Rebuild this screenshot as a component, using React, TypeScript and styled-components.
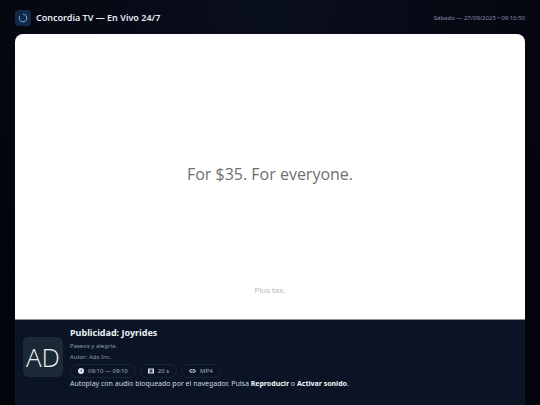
import * as React from 'react';
import styled, { createGlobalStyle } from 'styled-components';

const GlobalStyle = createGlobalStyle`
  html, body {
    margin: 0;
    height: 100%;
    overflow: hidden;
    background: #03050e;
    font-family: "Noto Sans", sans-serif;
  }
`;

const Page = styled.div`
  width: 540px;
  height: 405px;
  overflow: hidden;
  background: radial-gradient(circle at 50% 0, #0a0f1d 0, #04060f 60%, #02040c 100%);
  padding: 0 15px;
  box-sizing: border-box;
`;

const Header = styled.header`
  height: 34px;
  padding-top: 1px;
  box-sizing: border-box;
  display: flex;
  align-items: center;
  justify-content: space-between;
`;

const Brand = styled.div`
  display: flex;
  align-items: center;
  gap: 5px;
`;

const Logo = styled.div`
  width: 16px;
  height: 16px;
  border-radius: 4px;
  background: #12294a;
  display: flex;
  align-items: center;
  justify-content: center;
`;

const Title = styled.h1`
  margin: 0;
  font-size: 9px;
  font-weight: 600;
  color: #e6eaf2;
  line-height: 12px;
`;

const Clock = styled.div`
  font-size: 6px;
  color: #8491ab;
`;

const Player = styled.main`
  border-radius: 8px 8px 0 0;
  overflow: hidden;
  background: #0a1424;
`;

const Video = styled.section`
  height: 285px;
  background: #fff;
  border-bottom: 1px solid #8b8f96;
  display: flex;
  flex-direction: column;
  align-items: center;
`;

const Headline = styled.div`
  margin-top: 129px;
  font-family: "Open Sans", sans-serif;
  font-size: 16px;
  line-height: 22px;
  color: #6f6f6f;
`;

const Fine = styled.div`
  margin-top: 99px;
  font-family: "Open Sans", sans-serif;
  font-size: 8px;
  line-height: 12px;
  color: #b4b4b4;
`;

const Info = styled.section`
  height: 85px;
  box-sizing: border-box;
  padding: 7px 8px 0;
  display: flex;
  gap: 7px;
  background: #0a1424;
`;

const Poster = styled.div`
  flex: none;
  width: 40px;
  height: 40px;
  margin-top: 10px;
  border-radius: 5px;
  background: #1b2835;
  display: flex;
  align-items: center;
  justify-content: center;
  font-size: 26px;
  font-weight: 200;
  color: #e8edf4;
  font-family: "Open Sans", sans-serif;
`;

const Details = styled.div`
  display: flex;
  flex-direction: column;
  min-width: 0;
`;

const Name = styled.h2`
  margin: 0;
  font-size: 9px;
  line-height: 12px;
  font-weight: 700;
  color: #edf1f7;
`;

const Meta = styled.div<{ $top: number }>`
  margin-top: ${(p) => p.$top}px;
  font-size: 6px;
  line-height: 8px;
  color: #8e9ab0;
`;

const Chips = styled.div`
  margin-top: 3px;
  display: flex;
  gap: 4px;
`;

const Chip = styled.span`
  height: 14px;
  box-sizing: border-box;
  padding: 0 7px;
  display: inline-flex;
  align-items: center;
  gap: 4px;
  border: 1px solid #18243a;
  border-radius: 7px;
  font-size: 6px;
  color: #a3afc3;
  & svg {
    display: block;
  }
`;

const Notice = styled.p`
  margin: 1px 0 0;
  font-size: 7px;
  line-height: 10px;
  color: #cdd4e0;
  white-space: nowrap;
  & strong {
    font-weight: 700;
    color: #f0f3f8;
  }
`;

const ClockIcon = () => (
  <svg width="6" height="6" viewBox="0 0 12 12">
    <circle cx="6" cy="6" r="6" fill="#dfe5ee" />
    <path d="M6 3v3.2l2 1.2" stroke="#0a1424" strokeWidth="1.3" fill="none" />
  </svg>
);

const FilmIcon = () => (
  <svg width="6" height="6" viewBox="0 0 12 12">
    <path
      fillRule="evenodd"
      fill="#dfe5ee"
      d="M1 1h10a1 1 0 0 1 1 1v8a1 1 0 0 1-1 1H1a1 1 0 0 1-1-1V2a1 1 0 0 1 1-1zm2 2v2.4h6V3zm0 3.6V9h6V6.6z"
    />
  </svg>
);

const LinkIcon = () => (
  <svg width="7" height="6" viewBox="0 0 14 12" fill="none" stroke="#dfe5ee" strokeWidth="1.8">
    <path d="M6 8.5H4a2.6 2.6 0 0 1 0-5.2h1.5a2.6 2.6 0 0 1 2.4 1.7" />
    <path d="M8 3.5h2a2.6 2.6 0 0 1 0 5.2H8.5A2.6 2.6 0 0 1 6.1 7" />
  </svg>
);

export default function App() {
  return (
    <Page>
      <GlobalStyle />
      <Header>
        <Brand>
          <Logo>
            <svg width="10" height="10" viewBox="0 0 10 10" fill="none">
              <path
                d="M5 1.2a3.8 3.8 0 1 1-3.4 2.1"
                stroke="#6fb6e6"
                strokeWidth="1"
              />
            </svg>
          </Logo>
          <Title>Concordia TV — En Vivo 24/7</Title>
        </Brand>
        <Clock>Sábado — 27/09/2025 • 09:10:50</Clock>
      </Header>
      <Player>
        <Video>
          <Headline>For $35. For everyone.</Headline>
          <Fine>Plus tax.</Fine>
        </Video>
        <Info>
          <Poster>AD</Poster>
          <Details>
            <Name>Publicidad: Joyrides</Name>
            <Meta $top={3}>Paseos y alegría.</Meta>
            <Meta $top={3}>Autor: Ads Inc.</Meta>
            <Chips>
              <Chip><ClockIcon />09:10 — 09:10</Chip>
              <Chip><FilmIcon />20 s</Chip>
              <Chip><LinkIcon />MP4</Chip>
            </Chips>
            <Notice>
              Autoplay con audio bloqueado por el navegador. Pulsa <strong>Reproducir</strong> o{' '}
              <strong>Activar sonido</strong>.
            </Notice>
          </Details>
        </Info>
      </Player>
    </Page>
  );
}
